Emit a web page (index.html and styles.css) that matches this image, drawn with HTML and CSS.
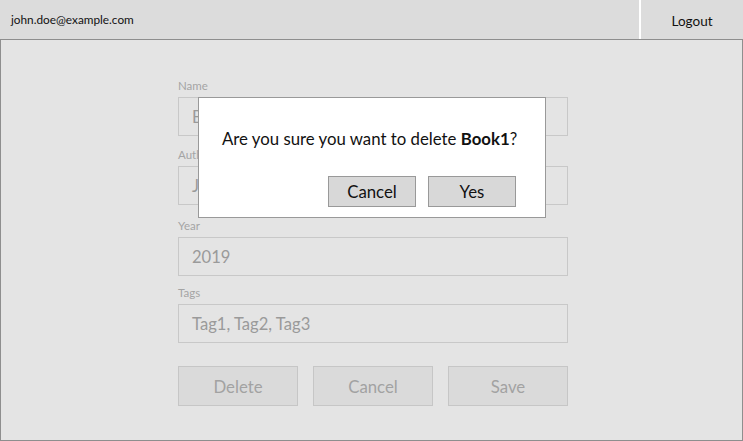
FILE: index.html
```html
<!DOCTYPE html>
<html>
<head>
<meta charset="utf-8">
<link rel="stylesheet" href="styles.css">
</head>
<body>
<header class="topbar">
  <div class="email">john.doe@example.com</div>
  <div class="spacer"></div>
  <div class="divider"></div>
  <div class="logout">Logout</div>
</header>
<main class="main">
  <form class="form">
    <div class="field">
      <label class="label">Name</label>
      <div class="input">Book1</div>
    </div>
    <div class="field">
      <label class="label">Author</label>
      <div class="input">John Doe</div>
    </div>
    <div class="field field-year">
      <label class="label">Year</label>
      <div class="input">2019</div>
    </div>
    <div class="field">
      <label class="label">Tags</label>
      <div class="input">Tag1, Tag2, Tag3</div>
    </div>
    <div class="actions">
      <div class="btn">Delete</div>
      <div class="btn">Cancel</div>
      <div class="btn">Save</div>
    </div>
  </form>
  <div class="dialog">
    <p class="message">Are you sure you want to delete <b>Book1</b>?</p>
    <div class="dialog-actions">
      <div class="dbtn">Cancel</div>
      <div class="dbtn">Yes</div>
    </div>
  </div>
</main>
</body>
</html>
```
FILE: styles.css
```css
* { box-sizing: border-box; }
html, body { margin: 0; padding: 0; }
body {
  width: 743px;
  height: 441px;
  overflow: hidden;
  font-family: Lato, "Open Sans", sans-serif;
  background: #e4e4e4;
}
.topbar {
  height: 39px;
  display: flex;
  background: #dcdcdc;
}
.email {
  font-size: 11.8px;
  color: #111;
  padding-left: 11px;
  display: flex;
  align-items: center;
}
.spacer { flex: 1; }
.divider { width: 2px; background: #fff; }
.logout {
  width: 102px;
  display: flex;
  align-items: center;
  justify-content: center;
  font-size: 13.5px;
  color: #111;
  padding-top: 3px;
}
.main {
  position: relative;
  height: 402px;
  border: 1px solid #8e8e8e;
  background: #e4e4e4;
}
.form {
  width: 390px;
  margin: 0 0 0 177px;
  padding-top: 39px;
  display: flex;
  flex-direction: column;
}
.field {
  display: flex;
  flex-direction: column;
  margin-bottom: 12px;
}
.field-year {
  margin-top: 2px;
  margin-bottom: 10px;
}
.label {
  font-size: 11.5px;
  line-height: 14px;
  color: #a4a4a4;
  margin-bottom: 4px;
}
.input {
  height: 39px;
  border: 1px solid #c8c8c8;
  padding-left: 13px;
  display: flex;
  align-items: center;
  font-size: 16.6px;
  color: #9a9a9a;
}
.actions {
  display: flex;
  justify-content: space-between;
  margin-top: 11px;
}
.btn {
  width: 120px;
  height: 40px;
  background: #dadada;
  border: 1px solid #c6c6c6;
  display: flex;
  align-items: center;
  justify-content: center;
  font-size: 16.8px;
  color: #a2a2a2;
}
.dialog {
  position: absolute;
  left: 197px;
  top: 57px;
  width: 348px;
  height: 121px;
  background: #fff;
  border: 1px solid #999;
  padding: 31px 20px 10px 23px;
  display: flex;
  flex-direction: column;
}
.message {
  margin: 0;
  font-size: 16.8px;
  line-height: 20px;
  color: #111;
  white-space: nowrap;
}
.message b { font-weight: 700; }
.dialog-actions {
  margin-top: auto;
  margin-right: 9px;
  display: flex;
  justify-content: flex-end;
  gap: 12px;
}
.dbtn {
  width: 88px;
  height: 31px;
  background: #d8d8d8;
  border: 1px solid #999;
  display: flex;
  align-items: center;
  justify-content: center;
  font-size: 16.8px;
  color: #111;
}
```
